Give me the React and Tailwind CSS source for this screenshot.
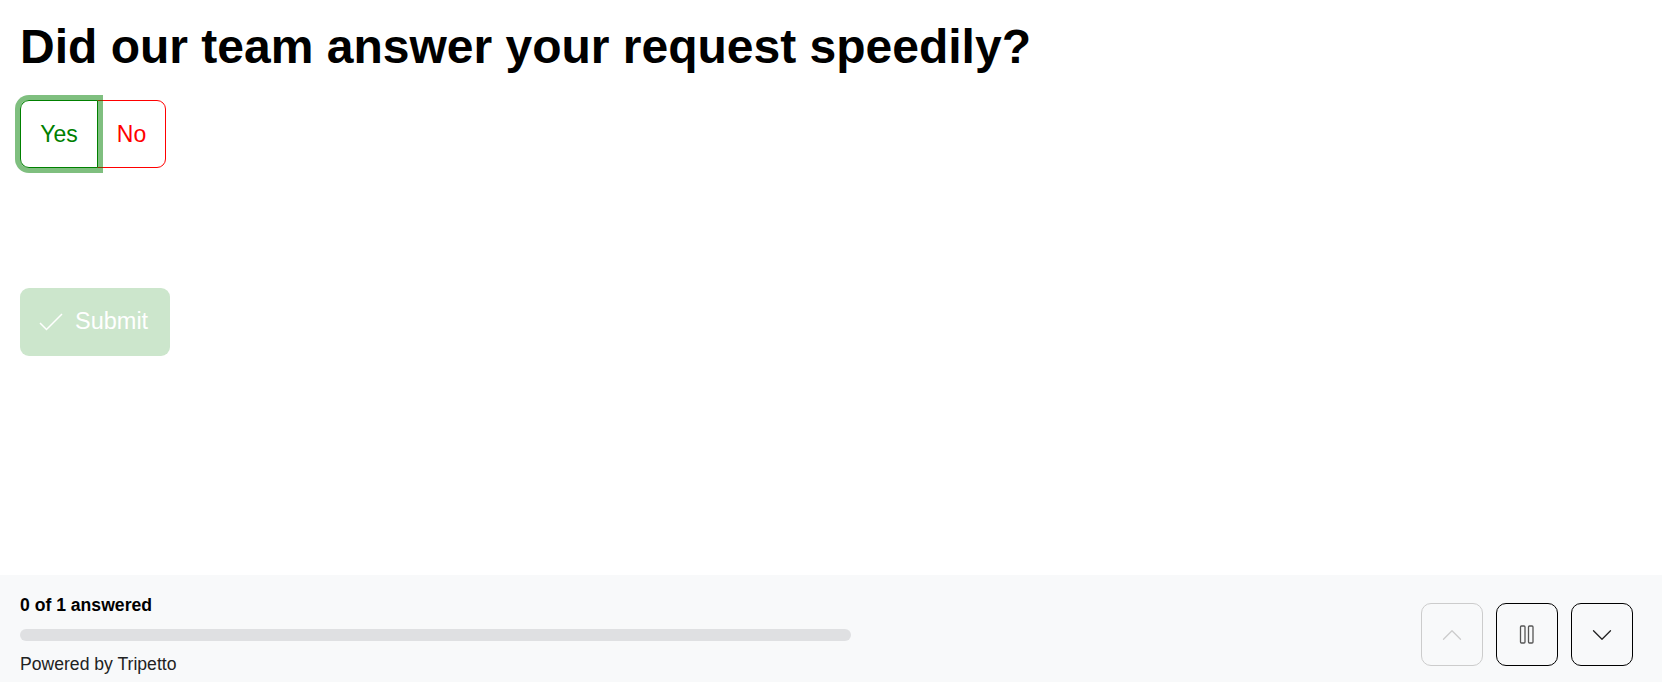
import { ChevronUp, ChevronDown } from 'lucide-react'

function Check() {
  return (
    <svg width="24" height="20" viewBox="0 0 24 20" fill="none" stroke="white" strokeWidth="1.5">
      <path d="M1 11 L7.5 17.5 L23 2" />
    </svg>
  )
}

function Pause() {
  return (
    <svg width="16" height="19" viewBox="0 0 16 19" fill="none" stroke="#555" strokeWidth="1.3">
      <rect x="1.5" y="1" width="4.5" height="17" rx="1" />
      <rect x="9.5" y="1" width="4.5" height="17" rx="1" />
    </svg>
  )
}

export default function App() {
  return (
    <div className="h-[682px] flex flex-col bg-white font-['Liberation_Sans',Arial,sans-serif] text-black">
      <main className="flex-1 pl-[20px] pt-[23px]">
        <h1 className="text-[48px] leading-none font-bold">Did our team answer your request speedily?</h1>
        <div className="mt-[29px] flex">
          <button className="relative z-10 h-[68px] w-[78px] border border-[#008000] rounded-l-[9px] text-[#008000] text-[23px] shadow-[0_0_0_5px_rgba(0,128,0,0.5)]">
            Yes
          </button>
          <button className="h-[68px] w-[69px] -ml-px border border-[#ff0000] rounded-r-[9px] text-[#ff0000] text-[23px]">
            No
          </button>
        </div>
        <button className="mt-[120px] h-[68px] w-[150px] rounded-[9px] bg-[#cce6cc] text-white text-[23.5px] flex items-center pl-[19px] gap-[12px]">
          <Check />
          <span>Submit</span>
        </button>
      </main>
      <footer className="h-[107px] bg-[#f8f9fa] flex justify-between pl-[20px] pr-[29px]">
        <div className="pt-[20px] w-[831px]">
          <div className="text-[17.6px] font-bold leading-[1.15]">0 of 1 answered</div>
          <div className="mt-[14px] h-[12px] rounded-full bg-[#dfe0e2]" />
          <div className="mt-[13px] text-[17.6px] leading-[1.15] text-[#222]">Powered by Tripetto</div>
        </div>
        <div className="mt-[28px] flex gap-[13px] h-[63px]">
          <button className="w-[62px] h-[63px] rounded-[10px] border border-[#cccccc] flex items-center justify-center">
            <ChevronUp size={34} strokeWidth={0.9} color="#cccccc" />
          </button>
          <button className="w-[62px] h-[63px] rounded-[10px] border border-black flex items-center justify-center">
            <Pause />
          </button>
          <button className="w-[62px] h-[63px] rounded-[10px] border border-black flex items-center justify-center">
            <ChevronDown size={34} strokeWidth={0.9} color="#222" />
          </button>
        </div>
      </footer>
    </div>
  )
}
